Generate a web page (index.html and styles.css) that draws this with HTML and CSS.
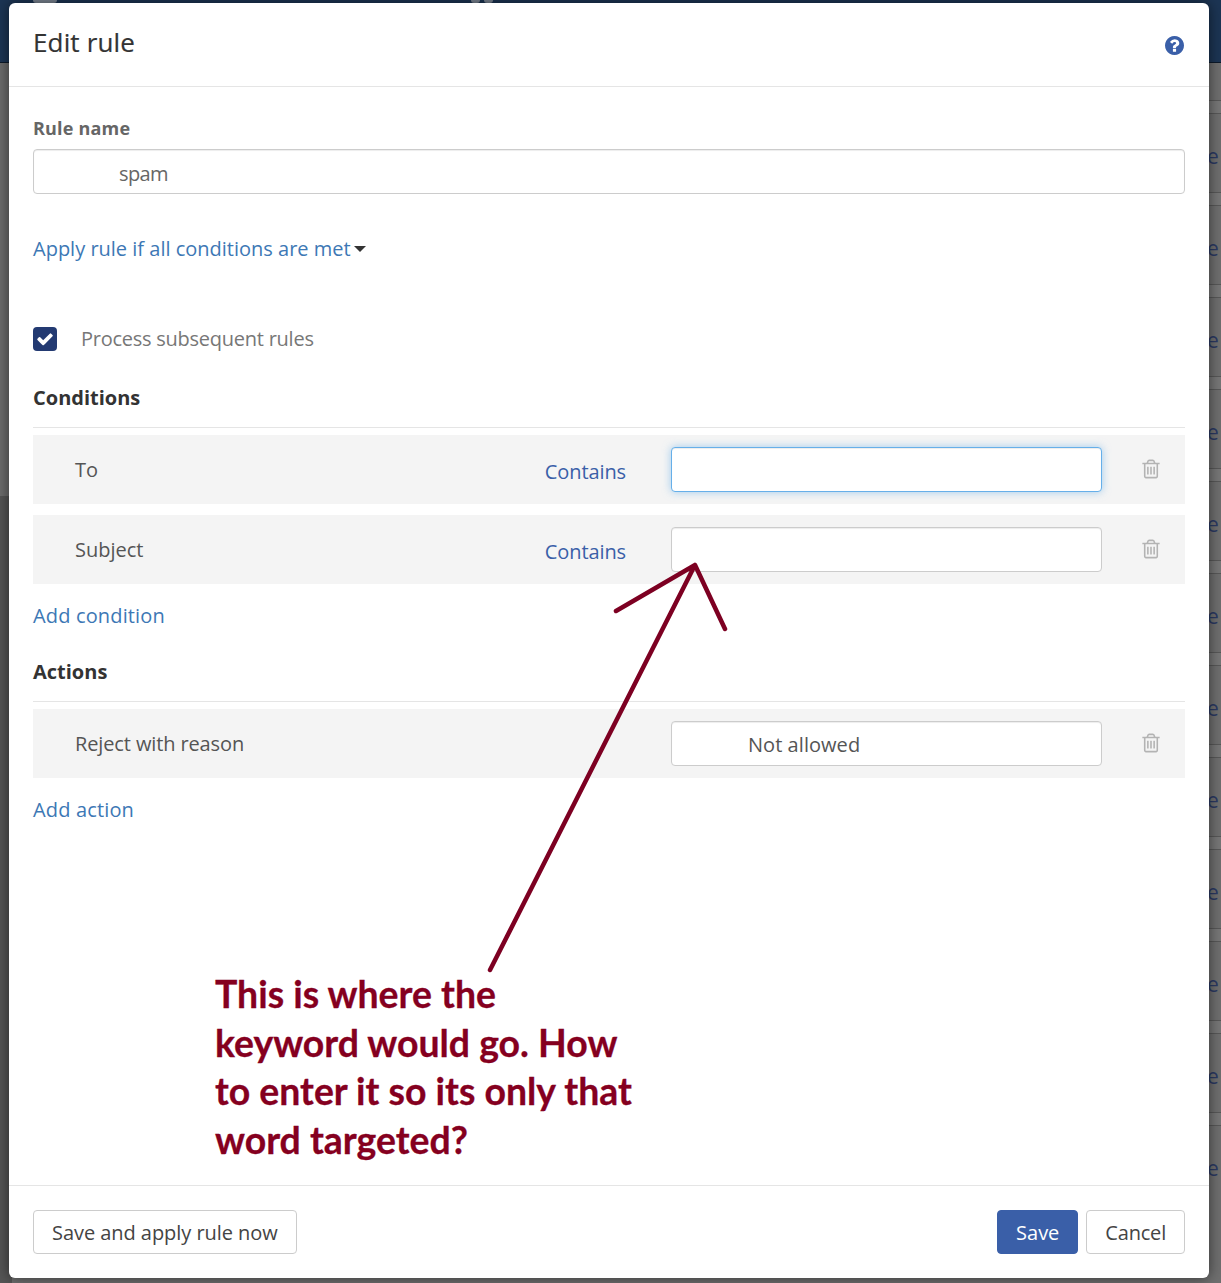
FILE: index.html
```html
<!DOCTYPE html>
<html lang="en">
<head>
<meta charset="utf-8">
<title>Edit rule</title>
<link rel="stylesheet" href="styles.css">
</head>
<body>
<div class="backdrop">
  <div class="topbar"><span class="stub stub-a"></span><span class="stub stub-b"></span><span class="stub stub-c"></span></div>
  <div class="under">
    <div class="rail"><div class="rail-top"></div><div class="rail-bottom"></div></div>
    <div class="rows">
      <div class="row-bg first">e</div><div class="row-bg">e</div><div class="row-bg">e</div><div class="row-bg">e</div>
      <div class="row-bg">e</div><div class="row-bg">e</div><div class="row-bg">e</div><div class="row-bg">e</div>
      <div class="row-bg">e</div><div class="row-bg">e</div><div class="row-bg">e</div><div class="row-bg">e</div>
    </div>
  </div>
</div>

<main class="modal">
  <header class="modal-head">
    <h1 class="title">Edit rule</h1>
    <svg class="help" viewBox="0 128 1536 1536" aria-label="Help"><path d="M896 1376v-192q0-14-9-23t-23-9h-192q-14 0-23 9t-9 23v192q0 14 9 23t23 9h192q14 0 23-9t9-23zm256-672q0-88-55.500-163t-138.500-116-170-41q-243 0-371 213-15 24 8 42l132 100q7 6 19 6 16 0 25-12 53-68 86-92 34-24 86-24 48 0 85.500 26t37.500 59q0 38-20 61t-68 45q-63 28-115.500 86.500t-52.500 125.500v36q0 14 9 23t23 9h192q14 0 23-9t9-23q0-19 21.500-49.500t54.500-49.500q32-18 49-28.500t46-35 44.500-48 28-60.500 12.500-81zm384 192q0 209-103 385.500t-279.500 279.500-385.500 103-385.500-103-279.500-279.500-103-385.500 103-385.500 279.500-279.500 385.500-103 385.500 103 279.500 279.500 103 385.500z"/></svg>
  </header>

  <section class="modal-body">
    <label class="field-label" for="rule-name">Rule name</label>
    <input id="rule-name" class="input input-name" type="text" value="spam">

    <a class="link apply" href="#">Apply rule if all conditions are met<span class="caret"></span></a>

    <div class="check-line">
      <span class="checkbox"><svg viewBox="0 0 1792 1792"><path d="M1671 566q0 40-28 68l-724 724-136 136q-28 28-68 28t-68-28l-136-136-362-362q-28-28-28-68t28-68l136-136q28-28 68-28t68 28l294 295 656-657q28-28 68-28t68 28l136 136q28 28 28 68z"/></svg></span>
      <span class="check-text">Process subsequent rules</span>
    </div>

    <h2 class="section-title">Conditions</h2>
    <div class="rule-row">
      <span class="rule-name">To</span>
      <a class="contains" href="#">Contains</a>
      <input class="input input-row focused" type="text">
      <svg class="trash" viewBox="0 0 1792 1792"><use href="#trash-shape"/></svg>
    </div>
    <div class="rule-row next">
      <span class="rule-name">Subject</span>
      <a class="contains" href="#">Contains</a>
      <input class="input input-row" type="text">
      <svg class="trash" viewBox="0 0 1792 1792"><use href="#trash-shape"/></svg>
    </div>
    <a class="link add" href="#">Add condition</a>

    <h2 class="section-title actions">Actions</h2>
    <div class="rule-row">
      <span class="rule-name tight">Reject with reason</span>
      <input class="input input-row input-reason" type="text" value="Not allowed">
      <svg class="trash" viewBox="0 0 1792 1792"><use href="#trash-shape"/></svg>
    </div>
    <a class="link add" href="#">Add action</a>
  </section>

  <footer class="modal-foot">
    <button class="btn btn-apply" type="button">Save and apply rule now</button>
    <span class="foot-right">
      <button class="btn btn-primary" type="button">Save</button>
      <button class="btn btn-cancel" type="button">Cancel</button>
    </span>
  </footer>
</main>

<svg class="arrow" viewBox="0 0 1221 1283" aria-hidden="true">
  <path d="M490 970 L695 565 M616 611 L695 565 L725 629"/>
</svg>
<p class="note">This is where the<br>keyword would go. How<br>to enter it so its only that<br>word targeted?</p>

<svg class="defs" aria-hidden="true"><defs><path id="trash-shape" d="M704 736v576q0 14-9 23t-23 9h-64q-14 0-23-9t-9-23v-576q0-14 9-23t23-9h64q14 0 23 9t9 23zm256 0v576q0 14-9 23t-23 9h-64q-14 0-23-9t-9-23v-576q0-14 9-23t23-9h64q14 0 23 9t9 23zm256 0v576q0 14-9 23t-23 9h-64q-14 0-23-9t-9-23v-576q0-14 9-23t23-9h64q14 0 23 9t9 23zm128 724v-948h-896v948q0 22 7 40.500t14.500 27 10.500 8.500h832q3 0 10.500-8.500t14.500-27 7-40.500zm-672-1076h448l-48-117q-7-9-17-11h-317q-10 2-17 11zm928 32v64q0 14-9 23t-23 9h-96v948q0 83-47 143.500t-113 60.500h-832q-66 0-113-58.500t-47-141.500v-952h-96q-14 0-23-9t-9-23v-64q0-14 9-23t23-9h309l70-167q15-37 54-63t79-26h320q40 0 79 26t54 63l70 167h309q14 0 23 9t9 23z"/></defs></svg>
```

FILE: styles.css
```css
* { box-sizing: border-box; }
html, body { margin: 0; height: 1283px; overflow: hidden; }
body {
  background: #6f6f6f;
  font-family: "Open Sans", "Noto Sans", sans-serif;
  font-size: 20px;
  color: #555;
  position: relative;
  padding: 3px 12px 5px 9px;
}

/* dimmed page behind the dialog */
.backdrop { position: absolute; inset: 0; display: flex; flex-direction: column; }
.topbar {
  height: 63px;
  background: #1c3554;
  border-bottom: 1px solid #0d1a2a;
  display: flex;
}
.stub { height: 3px; background: #7d8794; border-radius: 0 0 4px 4px; }
.stub-a { width: 24px; margin-left: 33px; }
.stub-b { width: 9px; margin-left: 414px; }
.stub-c { width: 9px; margin-left: 4px; }
.under { flex: 1; display: flex; justify-content: space-between; }
.rail { width: 12px; display: flex; flex-direction: column; }
.rail-top { height: 433px; background: #6c6c6c; }
.rail-bottom { flex: 1; background: #555; }
.rows { width: 14px; padding-top: 37px; }
.row-bg {
  height: 92px;
  border-top: 1px solid #585858;
  background: linear-gradient(#777 0 12px, #6f6f6f 12px);
  position: relative;
  font-size: 21px;
  line-height: 1;
  color: #2b3a63;
  padding-top: 45px;
  padding-left: 0;
}
.row-bg::before {
  content: "";
  position: absolute;
  left: 0; right: 0; top: 12px;
  border-top: 1px solid #585858;
}

/* dialog */
.modal {
  position: relative;
  height: 1275px;
  background: #fff;
  border-radius: 6px;
  box-shadow: 0 0 14px rgba(0, 0, 0, .55);
  display: flex;
  flex-direction: column;
}
.modal-head {
  height: 84px;
  padding: 0 25px 0 24px;
  border-bottom: 1px solid #e5e5e5;
  display: flex;
  align-items: center;
  justify-content: space-between;
}
.title { margin: 0 0 6px; font-size: 26px; font-weight: 400; color: #333; line-height: 1; letter-spacing: .15px; -webkit-text-stroke: .2px #333; }
.help { width: 19px; height: 19px; fill: #3a5fa8; margin-top: 1px; }

.modal-body { flex: 1; padding: 27px 24px 0; display: flex; flex-direction: column; align-items: flex-start; }
.field-label { font-weight: 700; font-size: 18px; line-height: 28px; color: #666; margin-bottom: 7px; letter-spacing: .2px; }
.input {
  display: block;
  height: 45px;
  border: 1px solid #ccc;
  border-radius: 4px;
  background: #fff;
  font: inherit;
  color: #555;
  outline: none;
  box-shadow: inset 0 1px 1px rgba(0, 0, 0, .075);
}
.input-name { width: 100%; padding: 3px 0 0 85px; margin-bottom: 39px; letter-spacing: -.6px; color: #666; }
.link { color: #3d78b5; text-decoration: none; line-height: 32px; }
.apply { display: flex; align-items: center; margin-bottom: 62px; }
.caret {
  margin-left: 3px;
  border-top: 6px solid #333;
  border-left: 6px solid transparent;
  border-right: 6px solid transparent;
}
.check-line { display: flex; align-items: center; height: 24px; margin-bottom: 32px; }
.checkbox {
  width: 24px; height: 24px;
  background: #233a72;
  border-radius: 4px;
  display: flex;
  align-items: center;
  justify-content: center;
  margin-right: 24px;
}
.checkbox svg { width: 18px; height: 18px; fill: #fff; }
.check-text { color: #777; letter-spacing: -.25px; margin-top: -1px; }
.section-title {
  align-self: stretch;
  margin: 0 0 7px;
  font-size: 20px;
  font-weight: 700;
  color: #333;
  line-height: 30px;
  padding-bottom: 14px;
  border-bottom: 1px solid #e5e5e5;
}
.section-title.actions { margin-top: 25px; }
.rule-row {
  align-self: stretch;
  height: 69px;
  background: #f4f4f4;
  display: flex;
  align-items: center;
  padding: 0 23px 0 42px;
}
.rule-row.next { margin-top: 11px; }
.rule-name { flex: 1; color: #555; margin-top: -1px; }
.rule-name.tight { letter-spacing: -.12px; }
.contains { color: #3a5fa8; text-decoration: none; margin-right: 45px; margin-top: 3px; letter-spacing: -.1px; }
.input-row { width: 431px; flex: none; margin-right: 38px; }
.input-reason { padding: 2px 0 0 76px; letter-spacing: .05px; }
.focused { border-color: #66afe9; box-shadow: inset 0 1px 1px rgba(0, 0, 0, .075), 0 0 8px rgba(102, 175, 233, .6); }
.trash { width: 22px; height: 22px; fill: #b3b3b3; flex: none; margin-bottom: 1px; }
.add { margin-top: 16px; letter-spacing: .15px; }

.modal-foot {
  height: 93px;
  border-top: 1px solid #e5e5e5;
  padding: 24px 24px 0;
  display: flex;
  justify-content: space-between;
  align-items: flex-start;
}
.foot-right { display: flex; gap: 8px; }
.btn {
  height: 44px;
  padding: 1px 18px 0;
  background: #fff;
  border: 1px solid #ccc;
  border-radius: 4px;
  font: inherit;
  color: #444;
}
.btn-apply { letter-spacing: -.05px; }
.btn-cancel { letter-spacing: -.2px; }
.btn-primary { background: #3a5fa8; border-color: #3a5fa8; color: #fff; }

/* hand-drawn annotation on top of the screenshot */
.arrow { position: absolute; left: 0; top: 0; width: 1221px; height: 1283px; pointer-events: none; }
.arrow path { fill: none; stroke: #7d0022; stroke-width: 4.500; stroke-linecap: round; stroke-linejoin: round; }
.note {
  position: absolute;
  left: 215px;
  top: 970px;
  margin: 0;
  font-family: Lato, "Open Sans", sans-serif;
  font-weight: 700;
  font-size: 37.4px;
  line-height: 48.5px;
  color: #85001f;
  white-space: nowrap;
  -webkit-text-stroke: .3px #85001f;
}
.defs { position: absolute; width: 0; height: 0; }
```
